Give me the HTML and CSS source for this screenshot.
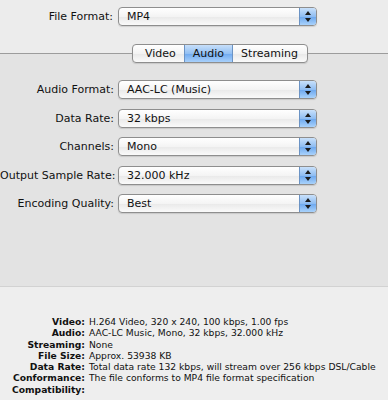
FILE: index.html
```html
<!DOCTYPE html>
<html lang="en">
<head>
    <meta charset="UTF-8">
    <title>Export Settings</title>
    <link rel="stylesheet" href="styles.css">
</head>
<body>
    <div class="top">
        <div class="field-row format-row">
            <label>File Format:</label>
            <div class="popup"><span>MP4</span><i class="stepper"></i></div>
        </div>
    </div>

    <div class="tab-row">
        <div class="tabs">
            <span class="tab">Video</span>
            <span class="tab selected">Audio</span>
            <span class="tab">Streaming</span>
        </div>
    </div>

    <div class="panel">
        <div class="field-row">
            <label>Audio Format:</label>
            <div class="popup"><span>AAC-LC (Music)</span><i class="stepper"></i></div>
        </div>
        <div class="field-row">
            <label>Data Rate:</label>
            <div class="popup"><span>32 kbps</span><i class="stepper"></i></div>
        </div>
        <div class="field-row">
            <label>Channels:</label>
            <div class="popup"><span>Mono</span><i class="stepper"></i></div>
        </div>
        <div class="field-row">
            <label>Output Sample Rate:</label>
            <div class="popup"><span>32.000 kHz</span><i class="stepper"></i></div>
        </div>
        <div class="field-row">
            <label>Encoding Quality:</label>
            <div class="popup"><span>Best</span><i class="stepper"></i></div>
        </div>
    </div>

    <div class="summary">
        <dl>
            <dt>Video:</dt><dd>H.264 Video, 320 x 240, 100 kbps, 1.00 fps</dd>
            <dt>Audio:</dt><dd>AAC-LC Music, Mono, 32 kbps, 32.000 kHz</dd>
            <dt>Streaming:</dt><dd>None</dd>
            <dt>File Size:</dt><dd>Approx. 53938 KB</dd>
            <dt>Data Rate:</dt><dd>Total data rate 132 kbps, will stream over 256 kbps DSL/Cable</dd>
            <dt>Conformance:</dt><dd>The file conforms to MP4 file format specification</dd>
            <dt>Compatibility:</dt><dd></dd>
        </dl>
    </div>
</body>
</html>
```

FILE: styles.css
```css
:root {
    --top-bg: #ececec;
    --panel-bg: #e3e3e3;
    --summary-bg: #eeeeee;
    --line: #9c9c9c;
    --text: #111;
}

body {
    margin: 0;
    width: 388px;
    height: 400px;
    overflow: hidden;
    font-family: "DejaVu Sans", Verdana, sans-serif;
    font-size: 11px;
    color: var(--text);
    background: var(--summary-bg);
}

.top {
    background: var(--top-bg);
    padding: 7px 0 0;
    height: 37px;
}

.field-row {
    display: grid;
    grid-template-columns: 114px 199px;
    column-gap: 4px;
    align-items: center;
}

.field-row label {
    text-align: right;
    white-space: nowrap;
}

.format-row {
    grid-template-columns: 113px 199px;
    column-gap: 5px;
}

.popup {
    display: flex;
    align-items: center;
    height: 17px;
    border: 1px solid #8e8e8e;
    border-radius: 4px;
    background: linear-gradient(#ffffff, #f4f4f4 50%, #e9e9e9 51%, #fafafa);
    box-shadow: 0 1px 1px rgba(0, 0, 0, 0.12);
    overflow: hidden;
}

.popup span {
    flex: 1;
    padding-left: 8px;
    white-space: nowrap;
}

.stepper {
    position: relative;
    width: 16px;
    height: 100%;
    border-left: 1px solid #6b93c4;
    background: linear-gradient(#c9e1fb, #8fbdf2 50%, #6aa6ee 51%, #a9d2fb);
}

/* up/down arrows on the stepper */
.stepper::before,
.stepper::after {
    content: "";
    position: absolute;
    left: 5px;
    border-left: 3px solid transparent;
    border-right: 3px solid transparent;
}

.stepper::before {
    top: 3px;
    border-bottom: 4px solid #1b1b1b;
}

.stepper::after {
    bottom: 3px;
    border-top: 4px solid #1b1b1b;
}

.tab-row {
    display: flex;
    align-items: center;
    height: 19px;
    background: linear-gradient(var(--top-bg) 50%, var(--panel-bg) 50%);
}

.tab-row::before,
.tab-row::after {
    content: "";
    flex: 1;
    border-top: 1px solid var(--line);
}

.tab-row::before {
    flex: 0 0 132px;
}

.tabs {
    display: flex;
    height: 17px;
    border: 1px solid #8e8e8e;
    border-radius: 4px;
    overflow: hidden;
    background: linear-gradient(#ffffff, #f3f3f3 50%, #e8e8e8 51%, #fbfbfb);
    box-shadow: 0 1px 1px rgba(0, 0, 0, 0.12);
}

.tab {
    display: flex;
    align-items: center;
    padding: 0 8px;
    border-left: 1px solid #a8a8a8;
}

.tab:first-child {
    border-left: none;
    padding-left: 12px;
}

.tab:last-child {
    padding-right: 9px;
}

.tab.selected {
    background: linear-gradient(#c7dffa, #93c0f3 50%, #6fa9ef 51%, #a8d0fb);
    border-left-color: #6b93c4;
}

.tab.selected + .tab {
    border-left-color: #6b93c4;
}

.panel {
    background: var(--panel-bg);
    height: 224px;
    padding-top: 17px;
    box-sizing: border-box;
    display: flex;
    flex-direction: column;
    gap: 9.5px;
    border-bottom: 1px solid #d2d2d2;
}

.summary {
    padding-top: 29px;
    font-size: 9.2px;
}

.summary dl {
    margin: 0;
    display: grid;
    grid-template-columns: 85px auto;
    column-gap: 4px;
    line-height: 11.3px;
}

.summary dt {
    font-weight: bold;
    text-align: right;
    white-space: nowrap;
}

.summary dd {
    margin: 0;
    white-space: nowrap;
}
```
